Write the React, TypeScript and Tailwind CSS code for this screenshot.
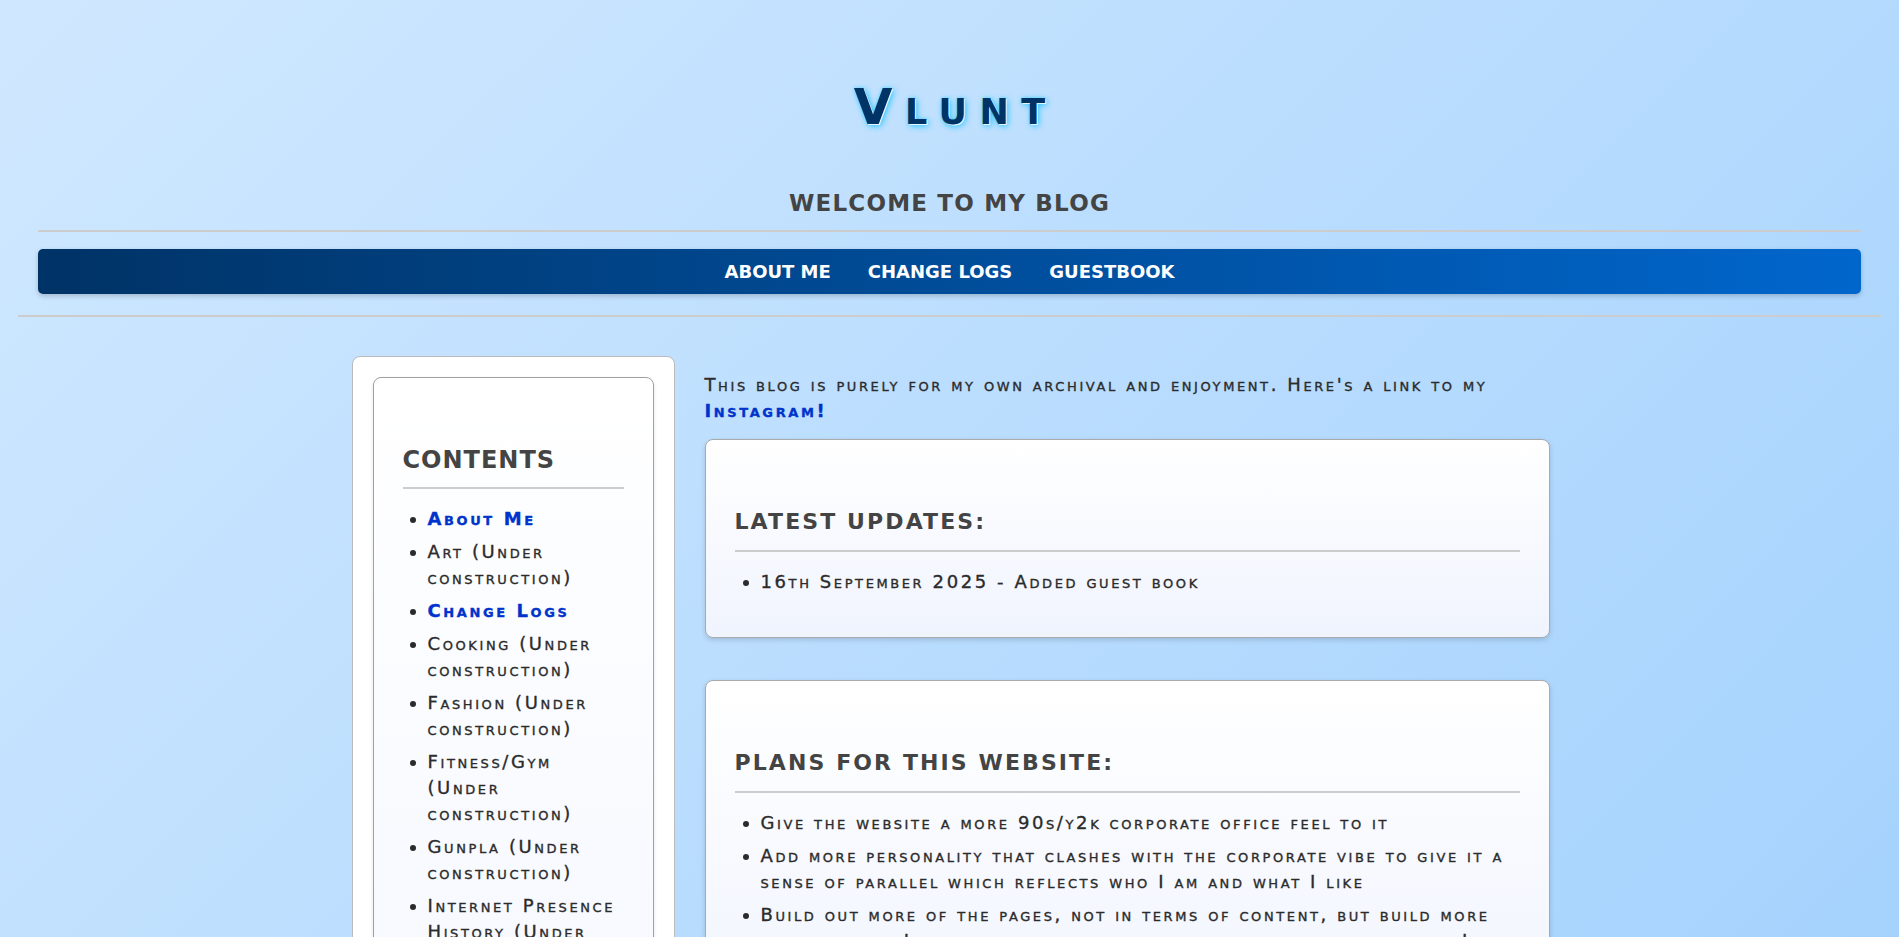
const body = "text-[18px] leading-[26px] tracking-[2.6px] [font-variant-caps:small-caps] [-webkit-text-stroke:0.35px_currentColor]";

const contents = [
  { label: 'About Me', link: true },
  { label: 'Art (Under construction)' },
  { label: 'Change Logs', link: true },
  { label: 'Cooking (Under construction)' },
  { label: 'Fashion (Under construction)' },
  { label: 'Fitness/Gym (Under construction)' },
  { label: 'Gunpla (Under construction)' },
  { label: 'Internet Presence History (Under construction)' },
  { label: 'Music (Under construction)' },
];

const plans = [
  'Give the website a more 90s/y2k corporate office feel to it',
  'Add more personality that clashes with the corporate vibe to give it a sense of parallel which reflects who I am and what I like',
  'Build out more of the pages, not in terms of content, but build more html files so I can link to different areas and have a place where I can put things',
];

function Card({ title, items, className = '' }: { title: string; items: string[]; className?: string }) {
  return (
    <section className={`rounded-[8px] border border-[#aaaaaa] bg-[linear-gradient(180deg,#ffffff,#f0f4fe)] px-[29px] pb-[28px] pt-[29px] shadow-[0_2px_5px_rgba(0,0,0,0.15)] ${className}`}>
      <h3 className="mt-[40px] border-b-2 border-[#cccccc] pb-[15px] text-[22px] font-bold leading-[26px] tracking-[2.1px] text-[#444]">
        {title}
      </h3>
      <ul className="mb-[14px] mt-[17px] flex list-disc flex-col gap-[7px] pl-[26px]">
        {items.map((i) => (
          <li key={i} className={body}>
            {i}
          </li>
        ))}
      </ul>
    </section>
  );
}

export default function App() {
  return (
    <div className="min-h-screen bg-[linear-gradient(135deg,#d0e8ff_0%,#a2d1fd_100%)] pb-10 font-['DejaVu_Sans',sans-serif] text-[#2b2b2b]">
      <header className="mx-[18px] px-5 pt-[77px]">
        <h1 className="pl-[12.5px] text-center text-[50px] font-bold leading-[60px] tracking-[12.5px] text-[#003366] [font-variant-caps:small-caps] [text-shadow:1px_1px_0_#e6f8ff,2px_2px_6px_#22c4ff,0_0_3px_#66d9ff]">
          Vlunt
        </h1>
        <h2 className="mt-[52px] border-b-2 border-[#cccccc] pb-[13px] text-center text-[23px] font-bold leading-[28px] tracking-[1.2px] text-[#444]">
          WELCOME TO MY BLOG
        </h2>
        <nav className="mt-[17px] flex h-[45px] items-center justify-center gap-[37px] rounded-[5px] bg-[linear-gradient(90deg,#003366,#0066cc)] shadow-[0_2px_5px_rgba(0,0,0,0.2)]">
          {['ABOUT ME', 'CHANGE LOGS', 'GUESTBOOK'].map((n) => (
            <a key={n} className="text-[18px] font-bold text-white">
              {n}
            </a>
          ))}
        </nav>
      </header>
      <div className="mx-[18px] mt-[21px] border-b-2 border-[#cccccc]" />

      <div className="mx-auto mt-[39px] flex max-w-[1200px] items-start gap-[30px] pl-[2px]">
        <aside className="w-[323px] shrink-0 rounded-[8px] border border-[#bbbbbb] bg-white p-5">
          <div className="rounded-[8px] border border-[#a0a0a0] bg-[linear-gradient(180deg,#ffffff,#f5f8ff)] pb-[30px] pl-[29px] pr-[29px] pt-[68px] shadow-[0_2px_4px_rgba(0,0,0,0.1)]">
            <h2 className="border-b-2 border-[#cccccc] pb-[12px] text-[24px] font-bold leading-[29px] tracking-[1px] text-[#444]">
              CONTENTS
            </h2>
            <ul className="mt-[17px] flex list-disc flex-col gap-[7px] pl-[25px]">
              {contents.map((c) => (
                <li key={c.label} className={body}>
                  {c.link ? <a className="font-bold text-[#0033cc]">{c.label}</a> : c.label}
                </li>
              ))}
            </ul>
          </div>
        </aside>

        <main className="min-w-0 flex-1">
          <p className={`mt-[16px] ${body}`}>
            This blog is purely for my own archival and enjoyment. Here's a link to my{' '}
            <a className="font-bold text-[#0033cc]">Instagram!</a>
          </p>

          <Card className="mt-[15px]" title="LATEST UPDATES:" items={['16th September 2025 - Added guest book']} />
          <Card className="mt-[42px]" title="PLANS FOR THIS WEBSITE:" items={plans} />
        </main>
      </div>
    </div>
  );
}
